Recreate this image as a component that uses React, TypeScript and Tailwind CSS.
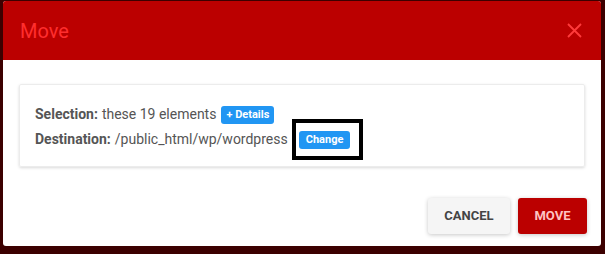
export default function App() {
  return (
    <div className="w-[605px] h-[254px] bg-[#3c0000] pt-[1px] pl-[3px] overflow-hidden" style={{ fontFamily: 'Roboto, "Liberation Sans", sans-serif' }}>
      <div className="w-[598px] h-[245px] bg-white rounded-[3px] overflow-hidden flex flex-col">
        {/* Header */}
        <div className="h-[59px] bg-[#bb0000] flex items-center justify-between pl-[17px] pr-[19px] shrink-0">
          <span className="text-[20px] text-[#ff2e2e] leading-none">Move</span>
          <svg width="15" height="15" viewBox="0 0 15 15" className="text-[#ff3b3b]">
            <path d="M1 1 L14 14 M14 1 L1 14" stroke="currentColor" strokeWidth="1.8" fill="none" />
          </svg>
        </div>

        {/* Body */}
        <div className="px-[16px] pt-[24px]">
          <div className="h-[83px] rounded-[2px] border border-[#ececec] shadow-[0_1px_3px_rgba(0,0,0,0.15)] pl-[15px] pt-[17px] text-[14px] text-[#555]">
            <div className="leading-[25px] flex items-center">
              <span className="font-bold">Selection:</span>
              <span className="ml-[4px]">these 19 elements</span>
              <span className="ml-[5px] h-[18px] px-[5px] rounded-[3px] bg-[#2196f3] text-white text-[11px] font-bold flex items-center">+ Details</span>
            </div>
            <div className="leading-[25px] flex items-center">
              <span className="font-bold">Destination:</span>
              <span className="ml-[4px]">/public_html/wp/wordpress</span>
              <span className="relative ml-[11px]">
                <span className="h-[18px] px-[7px] rounded-[3px] bg-[#2196f3] text-white text-[11px] font-bold flex items-center">Change</span>
                <span className="absolute -left-[7px] -top-[12px] w-[71px] h-[41px] border-[4px] border-black"></span>
              </span>
            </div>
          </div>
        </div>

        {/* Footer */}
        <div className="mt-auto flex justify-end gap-[8px] pr-[14px] pb-[12px]">
          <button className="w-[82px] h-[36px] rounded-[3px] bg-[#f5f5f5] shadow-[0_1px_4px_rgba(0,0,0,0.22)] text-[13px] font-bold text-[#444]">CANCEL</button>
          <button className="w-[69px] h-[36px] rounded-[3px] bg-[#bb0000] shadow-[0_1px_4px_rgba(0,0,0,0.22)] text-[13px] font-bold text-[#ffc2c2]">MOVE</button>
        </div>
      </div>
    </div>
  );
}
